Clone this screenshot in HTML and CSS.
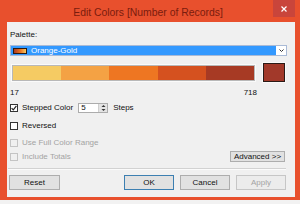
FILE: index.html
```html
<!DOCTYPE html>
<html>
<head>
<meta charset="utf-8">
<link rel="stylesheet" href="styles.css">
</head>
<body>
<div class="window">
  <div class="titlebar">
    <div></div>
    <div class="title">Edit Colors [Number of Records]</div>
    <div class="tb-right">
      <div class="close"><svg width="6" height="6" viewBox="0 0 6 6"><path d="M0.5 0.5L5.5 5.5M5.5 0.5L0.5 5.5" stroke="#fff" stroke-width="1.2"/></svg></div>
    </div>
  </div>
  <div class="client">
    <div class="label">Palette:</div>
    <div class="select">
      <div class="sel-value"><span class="grad"></span><span class="sel-text">Orange-Gold</span></div>
      <div class="sel-arrow"><svg width="5" height="3" viewBox="0 0 5 3"><path d="M0.5 0.5L2.5 2.5L4.5 0.5" fill="none" stroke="#333" stroke-width="1"/></svg></div>
    </div>
    <div class="ramp-row">
      <div class="ramp">
        <span class="step s1"></span><span class="step s2"></span><span class="step s3"></span><span class="step s4"></span><span class="step s5"></span>
      </div>
      <div class="swatch"></div>
    </div>
    <div class="ends"><span>17</span><span>718</span></div>
    <div class="opt stepped">
      <span class="cb checked"><svg width="6" height="6" viewBox="0 0 6 6"><path d="M0.6 3.1L2.3 4.8L5.4 0.9" fill="none" stroke="#222" stroke-width="1.2"/></svg></span>
      <span>Stepped Color</span>
      <span class="spin"><span class="spin-val">5</span><span class="spin-btns"><svg width="5" height="8" viewBox="0 0 5 8"><path d="M0.5 3L2.5 1L4.5 3Z M0.5 5L2.5 7L4.5 5Z" fill="#333"/></svg></span></span>
      <span class="steps">Steps</span>
    </div>
    <div class="opt gap8"><span class="cb"></span><span>Reversed</span></div>
    <div class="opt gap8 disabled"><span class="cb"></span><span>Use Full Color Range</span></div>
    <div class="last-row">
      <div class="opt disabled"><span class="cb"></span><span>Include Totals</span></div>
      <div class="btn adv">Advanced &gt;&gt;</div>
    </div>
    <div class="sep"></div>
    <div class="buttons">
      <div class="btn">Reset</div>
      <div class="btn-group">
        <div class="btn default">OK</div>
        <div class="btn">Cancel</div>
        <div class="btn disabled-btn">Apply</div>
      </div>
    </div>
  </div>
</div>
</body>
</html>
```
FILE: styles.css
```css
* { box-sizing: border-box; }
html, body { margin: 0; padding: 0; }
body {
  width: 300px;
  height: 204px;
  background: #f2f2f2;
  font-family: "Liberation Sans", Arial, sans-serif;
  font-size: 8px;
  color: #111;
  overflow: hidden;
}
.window {
  width: 300px;
  height: 200px;
  background: #e8502d;
  display: flex;
  flex-direction: column;
}
.titlebar {
  height: 22px;
  display: grid;
  grid-template-columns: 1fr auto 1fr;
  align-items: start;
}
.title {
  font-size: 10.4px;
  line-height: 12px;
  margin-top: 7px;
  color: #7a1c0e;
  margin-right: 4px;
}
.tb-right {
  display: flex;
  justify-content: flex-end;
  padding-right: 5px;
}
.close {
  width: 22px;
  height: 17px;
  background: #c9453b;
  display: flex;
  align-items: center;
  justify-content: center;
}
.client {
  flex: 1;
  margin: 0 5px 3px 7px;
  background: #f0f0f0;
  padding: 8px 0 0 0;
  display: flex;
  flex-direction: column;
}
.label {
  line-height: 9px;
  height: 9px;
  margin-left: 3px;
}
.select {
  margin: 6px 8px 0 3px;
  height: 11px;
  border: 1px solid #a9bad6;
  display: flex;
  background: #fff;
}
.sel-value {
  flex: 1;
  background: #3399ff;
  display: flex;
  align-items: center;
  color: #fff;
}
.grad {
  width: 14px;
  height: 6px;
  margin-left: 2px;
  border: 1px solid #2a1a14;
  background: linear-gradient(to right, #a83a24, #ee7622 55%, #f5cb63);
}
.sel-text {
  margin-left: 4px;
  line-height: 9px;
}
.sel-arrow {
  width: 10px;
  display: flex;
  align-items: center;
  justify-content: center;
}
.ramp-row {
  margin: 7px 0 0 5px;
  height: 19px;
  display: flex;
  align-items: center;
}
.ramp {
  width: 243px;
  height: 16px;
  border: 1px solid #b8b8b8;
  box-shadow: 0 0 0 1px #fafafa;
  display: flex;
}
.step { flex: 1; }
.s1 { background: #f5cb63; }
.s2 { background: #f4a244; }
.s3 { background: #ee7622; }
.s4 { background: #d5511f; }
.s5 { background: #a73a24; }
.swatch {
  margin-left: 8px;
  width: 22px;
  height: 19px;
  background: #a2392a;
  border: 1px solid #2b1a16;
  box-shadow: 0 0 0 1px #fafafa;
}
.ends {
  margin: 6px 0 0 3px;
  width: 247px;
  line-height: 9px;
  height: 9px;
  display: flex;
  justify-content: space-between;
}
.opt {
  display: flex;
  align-items: center;
  margin-left: 3px;
  height: 9px;
  line-height: 9px;
}
.opt.stepped {
  margin-top: 5px;
  height: 11px;
}
.gap8 { margin-top: 8px; }
.cb {
  width: 8px;
  height: 8px;
  border: 1px solid #333;
  background: #fff;
  margin-right: 4px;
  display: flex;
  align-items: center;
  justify-content: center;
}
.disabled { color: #a3a3a3; }
.disabled .cb {
  border-color: #c4c4c4;
  background: #f0f0f0;
}
.spin {
  margin-left: 5px;
  width: 30px;
  height: 10px;
  border: 1px solid #acacac;
  background: #fff;
  display: flex;
  align-items: center;
}
.spin-val {
  flex: 1;
  padding-left: 2px;
  line-height: 8px;
}
.spin-btns {
  width: 9px;
  height: 8px;
  background: #e4e4e4;
  border-left: 1px solid #cfcfcf;
  display: flex;
  align-items: center;
  justify-content: center;
}
.steps { margin-left: 5px; }
.last-row {
  margin: 4px 10px 0 0;
  height: 11px;
  display: flex;
  align-items: center;
  justify-content: space-between;
}
.btn {
  width: 51px;
  height: 15px;
  border: 1px solid #adadad;
  background: #e1e1e1;
  display: flex;
  align-items: center;
  justify-content: center;
  line-height: 9px;
}
.btn.adv {
  width: 55px;
  height: 11px;
}
.btn.default { border-color: #3c7fb1; }
.btn.disabled-btn {
  color: #a3a3a3;
  border-color: #c6c6c6;
  background: #ececec;
}
.sep {
  margin: 6px 9px 0 1px;
  height: 2px;
  border-top: 1px solid #d2d2d2;
  border-bottom: 1px solid #fbfbfb;
}
.buttons {
  margin: 5px 9px 0 2px;
  display: flex;
  justify-content: space-between;
}
.btn-group {
  display: flex;
  gap: 6px;
}
.btn-group .btn { width: 50px; }
```
